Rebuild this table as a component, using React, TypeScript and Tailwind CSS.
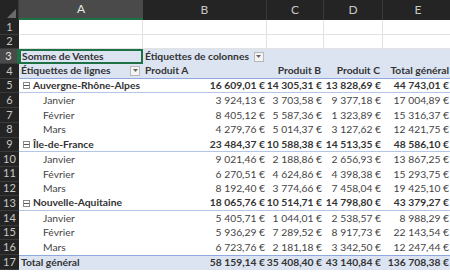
import React from "react";

type Row = {
    label: string;
    values: string[];
    kind: "region" | "month" | "total";
};

const rows: Row[] = [
    { label: "Auvergne-Rhône-Alpes", kind: "region", values: ["16 609,01 €", "14 305,31 €", "13 828,69 €", "44 743,01 €"] },
    { label: "Janvier", kind: "month", values: ["3 924,13 €", "3 703,58 €", "9 377,18 €", "17 004,89 €"] },
    { label: "Février", kind: "month", values: ["8 405,12 €", "5 587,36 €", "1 323,89 €", "15 316,37 €"] },
    { label: "Mars", kind: "month", values: ["4 279,76 €", "5 014,37 €", "3 127,62 €", "12 421,75 €"] },
    { label: "Île-de-France", kind: "region", values: ["23 484,37 €", "10 588,38 €", "14 513,35 €", "48 586,10 €"] },
    { label: "Janvier", kind: "month", values: ["9 021,46 €", "2 188,86 €", "2 656,93 €", "13 867,25 €"] },
    { label: "Février", kind: "month", values: ["6 270,51 €", "4 624,86 €", "4 398,38 €", "15 293,75 €"] },
    { label: "Mars", kind: "month", values: ["8 192,40 €", "3 774,66 €", "7 458,04 €", "19 425,10 €"] },
    { label: "Nouvelle-Aquitaine", kind: "region", values: ["18 065,76 €", "10 514,71 €", "14 798,80 €", "43 379,27 €"] },
    { label: "Janvier", kind: "month", values: ["5 405,71 €", "1 044,01 €", "2 538,57 €", "8 988,29 €"] },
    { label: "Février", kind: "month", values: ["5 936,29 €", "7 289,52 €", "8 917,73 €", "22 143,54 €"] },
    { label: "Mars", kind: "month", values: ["6 723,76 €", "2 181,18 €", "3 342,50 €", "12 247,44 €"] },
    { label: "Total général", kind: "total", values: ["58 159,14 €", "35 408,40 €", "43 140,84 €", "136 708,38 €"] },
];

const cols = "grid grid-cols-[19px_124px_124px_57px_59px_70px]";
const rowH = "h-[14.7px]";

const RowNum = ({ n, active }: { n: number; active?: boolean }) => (
    <div
        className={`${rowH} flex items-center justify-center text-[11px] font-normal text-[#c8c8c8] border-b border-[#3a3a3a] ${
            active ? "bg-[#4a4a4a] text-[#e6e6e6] border-r-2 border-r-[#1e7145]" : "bg-[#242424]"
        }`}
    >
        {n}
    </div>
);

const Dropdown = () => (
    <span className="inline-flex items-center justify-center w-[10px] h-[10px] border border-[#b8b8b8] bg-[#f4f4f4] shrink-0">
        <svg width="5" height="3" viewBox="0 0 5 3">
            <path d="M0 0 L5 0 L2.5 3 Z" fill="#666" />
        </svg>
    </span>
);

const Collapse = () => (
    <span className="inline-flex items-center justify-center w-[7px] h-[7px] border border-[#8a8a8a] bg-white mr-[3px]">
        <span className="block w-[5px] h-px bg-[#555]" />
    </span>
);

const App = () => {
    return (
        <div className="w-[450px] h-[272px] overflow-hidden bg-white text-[#333] font-['Lato','Liberation_Sans',sans-serif]">
            {/* column headers */}
            <div className={`${cols} h-[20px] bg-[#242424] text-[12px] text-[#c8c8c8]`}>
                <div className="relative border-r border-[#3a3a3a]">
                    <svg className="absolute right-[2px] bottom-[2px]" width="9" height="9" viewBox="0 0 9 9">
                        <path d="M9 0 L9 9 L0 9 Z" fill="#6a6a6a" />
                    </svg>
                </div>
                <div className="flex items-center justify-center bg-[#4a4a4a] text-[#e6e6e6] border-b-2 border-[#1e7145]">A</div>
                <div className="flex items-center justify-center border-r border-[#3a3a3a]">B</div>
                <div className="flex items-center justify-center border-r border-[#3a3a3a]">C</div>
                <div className="flex items-center justify-center border-r border-[#3a3a3a]">D</div>
                <div className="flex items-center justify-center">E</div>
            </div>

            {/* rows 1-2 */}
            {[1, 2].map((n) => (
                <div key={n} className={cols}>
                    <RowNum n={n} />
                    {[0, 1, 2, 3, 4].map((c) => (
                        <div key={c} className={`${rowH} border-r border-b border-[#e2e2e2]`} />
                    ))}
                </div>
            ))}

            {/* row 3 */}
            <div className={`${cols} text-[10.3px] font-bold whitespace-nowrap`}>
                <RowNum n={3} active />
                <div className={`${rowH} bg-[#dce4f2] border-2 border-[#1e7145] flex items-center pl-px`}>Somme de Ventes</div>
                <div className={`${rowH} bg-[#dce4f2] flex items-center gap-[5px] pl-[2px]`}>
                    Étiquettes de colonnes <Dropdown />
                </div>
                <div className={`${rowH} bg-[#dce4f2]`} />
                <div className={`${rowH} bg-[#dce4f2]`} />
                <div className={`${rowH} bg-[#dce4f2]`} />
            </div>

            {/* row 4 */}
            <div className={`${cols} text-[10.3px] font-bold whitespace-nowrap`}>
                <RowNum n={4} />
                <div className={`${rowH} bg-[#dce4f2] border-b border-[#8ea9db] flex items-center justify-between pl-[2px] pr-[3px]`}>
                    Étiquettes de lignes <Dropdown />
                </div>
                <div className={`${rowH} bg-[#dce4f2] border-b border-[#8ea9db] flex items-center pl-[2px]`}>Produit A</div>
                <div className={`${rowH} bg-[#dce4f2] border-b border-[#8ea9db] flex items-center justify-end pr-[3px]`}>Produit B</div>
                <div className={`${rowH} bg-[#dce4f2] border-b border-[#8ea9db] flex items-center justify-end pr-[3px]`}>Produit C</div>
                <div className={`${rowH} bg-[#dce4f2] border-b border-[#8ea9db] flex items-center justify-end pr-[4px]`}>Total général</div>
            </div>

            {/* pivot body */}
            {rows.map((r, i) => {
                const cell =
                    r.kind === "region"
                        ? "font-bold border-b border-[#b4c6e7]"
                        : r.kind === "total"
                        ? "font-bold bg-[#dce4f2] border-t border-[#8ea9db]"
                        : "text-[#444]";
                return (
                    <div key={i} className={`${cols} text-[10.3px]`}>
                        <RowNum n={i + 5} />
                        <div className={`${rowH} ${cell} flex items-center whitespace-nowrap ${r.kind === "month" ? "pl-[24px]" : r.kind === "region" ? "pl-[4px]" : "pl-[2px]"}`}>
                            {r.kind === "region" && <Collapse />}
                            {r.label}
                        </div>
                        {r.values.map((v, j) => (
                            <div key={j} className={`${rowH} ${cell} flex items-center justify-end whitespace-nowrap ${j === 3 ? "pr-[4px]" : "pr-[2px]"}`}>
                                {v}
                            </div>
                        ))}
                    </div>
                );
            })}
        </div>
    );
};

export default App;
